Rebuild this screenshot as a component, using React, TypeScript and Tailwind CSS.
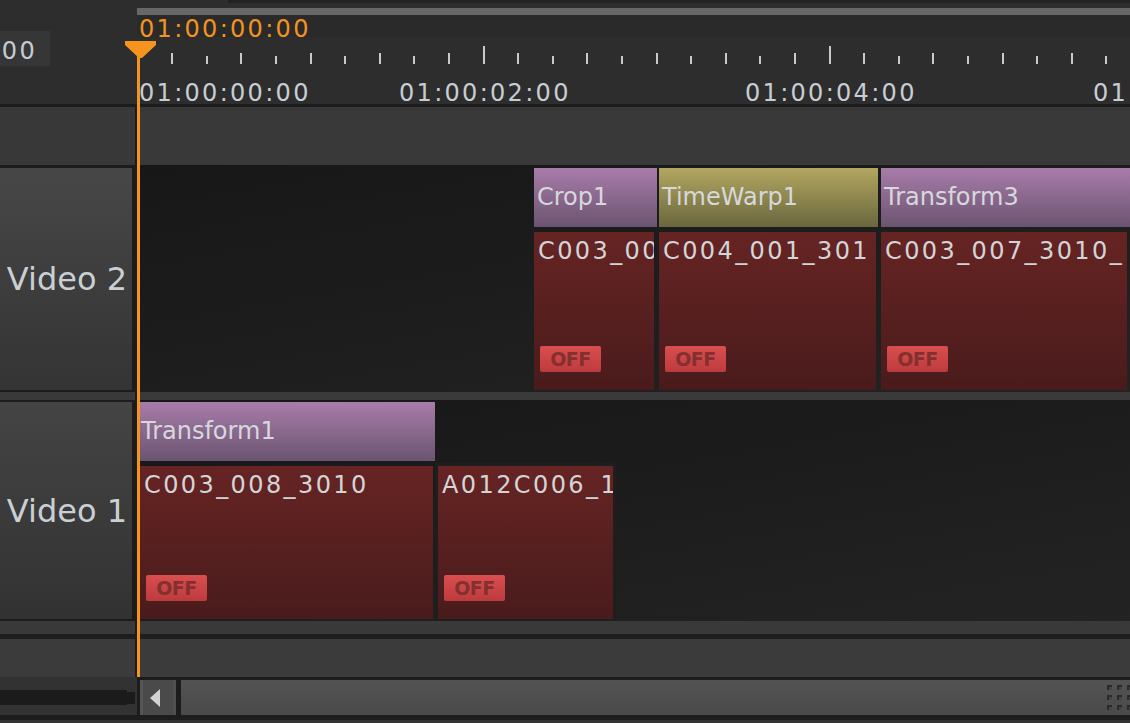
import React from "react";

const ticks = Array.from({ length: 29 }, (_, i) => i);

function Effect({ left, width, label, kind }: { left: number; width: number; label: string; kind: "purple" | "olive" }) {
  const bg =
    kind === "purple"
      ? "bg-[linear-gradient(to_bottom,#a87caa,#6b5470)]"
      : "bg-[linear-gradient(to_bottom,#b2a660,#6a673e)]";
  return (
    <div
      className={`absolute top-[3px] h-[59px] flex items-center pl-[3px] pb-[2px] overflow-hidden whitespace-nowrap text-[24px] leading-[24px] text-[#d6d8dc] ${bg}`}
      style={{ left, width }}
    >
      {label}
    </div>
  );
}

function Clip({ left, width, top, height, name }: { left: number; width: number; top: number; height: number; name: string }) {
  return (
    <div
      className="absolute overflow-hidden bg-[linear-gradient(to_bottom,#662423,#4a1b1c)]"
      style={{ left, width, top, height }}
    >
      <div className="pt-[5px] pl-[4px] whitespace-nowrap text-[24px] leading-[28px] tracking-[2.4px] text-[#d2d5d8]">{name}</div>
      <div className="absolute left-[6px] bottom-[18px] w-[61px] h-[26px] rounded-[2px] bg-[linear-gradient(to_bottom,#da4e4f,#bd3b3d)] flex items-center justify-center text-[19px] leading-[19px] font-bold tracking-[-0.5px] text-[#84302f]">
        OFF
      </div>
    </div>
  );
}

export default function App() {
  return (
    <div className="relative w-[1130px] h-[723px] overflow-hidden bg-[#2d2d2d] font-['DejaVu_Sans',sans-serif] flex flex-col">
      {/* Ruler section */}
      <div className="h-[104px] flex shrink-0">
        <div className="w-[137px] pt-[31px]">
          <div className="w-[50px] h-[35px] bg-[#363636] overflow-hidden flex justify-end items-start pt-[8px] pr-[13px]">
            <span className="shrink-0 whitespace-nowrap text-[24px] leading-[24px] tracking-[2.3px] text-[#c4ccd2]">01:00:00:00</span>
          </div>
        </div>
        <div className="flex-1 relative flex flex-col">
          <div className="h-[3px] flex">
            <div className="w-[91px] bg-[#2d2d2d]" />
            <div className="flex-1 bg-[#232323]" />
          </div>
          <div className="h-[5px]" />
          <div className="h-[7px] bg-[#676767]" />
          <div className="h-[22px] bg-[#2a2a2a] pt-[2px] pl-[2px] whitespace-nowrap text-[24px] leading-[24px] tracking-[2.3px] text-[#f3921f]">
            01:00:00:00
          </div>
          {ticks.map((i) => {
            const long = i % 10 === 0;
            const odd = i % 2 === 1;
            const h = long ? 18 : odd ? 11 : 8;
            return (
              <div
                key={i}
                className="absolute w-[2px] bg-[#c9c9c9]"
                style={{ left: 34.6 * i - 0.5, top: 64 - h, height: h }}
              />
            );
          })}
          <div className="absolute left-[2px] top-[81px] whitespace-nowrap text-[24px] leading-[24px] tracking-[2.3px] text-[#c6ced4]">01:00:00:00</div>
          <div className="absolute left-[262px] top-[81px] whitespace-nowrap text-[24px] leading-[24px] tracking-[2.3px] text-[#c6ced4]">01:00:02:00</div>
          <div className="absolute left-[608px] top-[81px] whitespace-nowrap text-[24px] leading-[24px] tracking-[2.3px] text-[#c6ced4]">01:00:04:00</div>
          <div className="absolute left-[956px] top-[81px] whitespace-nowrap text-[24px] leading-[24px] tracking-[2.3px] text-[#c6ced4]">01:00:06:00</div>
        </div>
      </div>

      <div className="h-[3px] bg-[#1c1c1c] shrink-0" />

      {/* Empty band */}
      <div className="h-[58px] flex shrink-0">
        <div className="w-[135px] bg-[#383838]" />
        <div className="w-[2px] bg-[#1c1c1c]" />
        <div className="flex-1 bg-[#393939]" />
      </div>

      {/* Video 2 */}
      <div className="h-[227px] flex bg-[#1c1c1c] shrink-0">
        <div className="w-[132px] pt-[3px] pb-[2px]">
          <div className="h-full bg-[linear-gradient(to_bottom,#474747,#343434)] flex items-center justify-end pr-[5px] text-[32px] leading-[32px] text-[#c9d0d4]">
            Video 2
          </div>
        </div>
        <div className="w-[5px]" />
        <div className="flex-1 relative overflow-hidden bg-[linear-gradient(170deg,#171717,#232323)]">
          <Effect left={397} width={123} label="Crop1" kind="purple" />
          <Effect left={522} width={219} label="TimeWarp1" kind="olive" />
          <Effect left={744} width={260} label="Transform3" kind="purple" />
          <Clip left={397} width={120} top={67} height={158} name="C003_007_3010_" />
          <Clip left={522} width={217} top={67} height={158} name="C004_001_301" />
          <Clip left={744} width={246} top={67} height={158} name="C003_007_3010_" />
        </div>
      </div>

      <div className="h-[8px] flex shrink-0">
        <div className="w-[135px] bg-[#393939]" />
        <div className="w-[2px] bg-[#1c1c1c]" />
        <div className="flex-1 bg-[#3a3a3a]" />
      </div>

      {/* Video 1 */}
      <div className="h-[221px] flex bg-[#1c1c1c] shrink-0">
        <div className="w-[132px] pt-[2px] pb-[2px]">
          <div className="h-full bg-[linear-gradient(to_bottom,#444444,#323232)] flex items-center justify-end pr-[5px] text-[32px] leading-[32px] text-[#c9d0d4]">
            Video 1
          </div>
        </div>
        <div className="w-[5px]" />
        <div className="flex-1 relative overflow-hidden bg-[linear-gradient(170deg,#171717,#232323)]">
          <div
            className="absolute left-0 top-[2px] w-[298px] h-[59px] flex items-center pl-[4px] pb-[2px] overflow-hidden whitespace-nowrap text-[24px] leading-[24px] text-[#d6d8dc] bg-[linear-gradient(to_bottom,#a87caa,#6b5470)]"
          >
            Transform1
          </div>
          <Clip left={3} width={293} top={66} height={153} name="C003_008_3010" />
          <div className="absolute left-[298px] top-[63px] w-[181px] h-[158px] bg-[#1e1e1e]" />
          <Clip left={301} width={175} top={66} height={153} name="A012C006_1" />
        </div>
      </div>

      <div className="h-[13px] flex shrink-0">
        <div className="w-[135px] bg-[#393939]" />
        <div className="w-[2px] bg-[#1c1c1c]" />
        <div className="flex-1 bg-[#393939]" />
      </div>
      <div className="h-[5px] bg-[#1e1e1e] shrink-0" />
      <div className="h-[38px] flex shrink-0">
        <div className="w-[135px] bg-[#3b3b3b]" />
        <div className="w-[2px] bg-[#1c1c1c]" />
        <div className="flex-1 bg-[#3b3b3b]" />
      </div>

      {/* Scroll bar */}
      <div className="h-[38px] flex shrink-0">
        <div className="w-[137px] bg-[#323232] pt-[13px] flex items-start">
          <div className="w-[127px] h-[15px] bg-[#1b1b1b]" />
          <div className="w-[8px] h-[12px] mt-[2px] bg-[#1b1b1b]" />
        </div>
        <div className="flex-1 flex flex-col">
          <div className="h-[3px] bg-[#1c1c1c]" />
          <div className="flex-1 flex">
            <div className="w-[3px] bg-[#1c1c1c]" />
            <div className="w-[36px] bg-[#4a4a4a] border-l-[3px] border-[#555555] border-r-[3px] border-r-[#505050] flex items-center pl-[7px]">
              <svg width="10" height="18" viewBox="0 0 10 18">
                <polygon points="0,9 10,0 10,18" fill="#d2d2d2" />
              </svg>
            </div>
            <div className="w-[5px] bg-[#1c1c1c]" />
            <div className="flex-1 bg-[linear-gradient(to_bottom,#535353,#4a4a4a)] flex justify-end items-start pt-[5px]">
              <svg width="23" height="25" viewBox="0 0 23 25">
                {[0, 10, 20].map((y) =>
                  [0, 10, 20].map((x) => (
                    <g key={`${x}-${y}`}>
                      <rect x={x} y={y} width="5" height="5" fill="#2a2a2a" />
                      <rect x={x + 2} y={y + 2} width="3" height="3" fill="#454545" />
                    </g>
                  ))
                )}
              </svg>
            </div>
          </div>
        </div>
      </div>
      <div className="h-[5px] bg-[#1d1d1d] shrink-0" />
      <div className="flex-1 bg-[#333333]" />

      {/* Playhead */}
      <svg className="absolute left-[125px] top-[41px]" width="31" height="17" viewBox="0 0 31 17">
        <polygon points="0,0 31,0 31,4 17,17 14,17 0,4" fill="#f7941d" />
      </svg>
      <div className="absolute left-[137px] top-[56px] w-[3px] h-[621px] bg-[#f7941d]" />
    </div>
  );
}
